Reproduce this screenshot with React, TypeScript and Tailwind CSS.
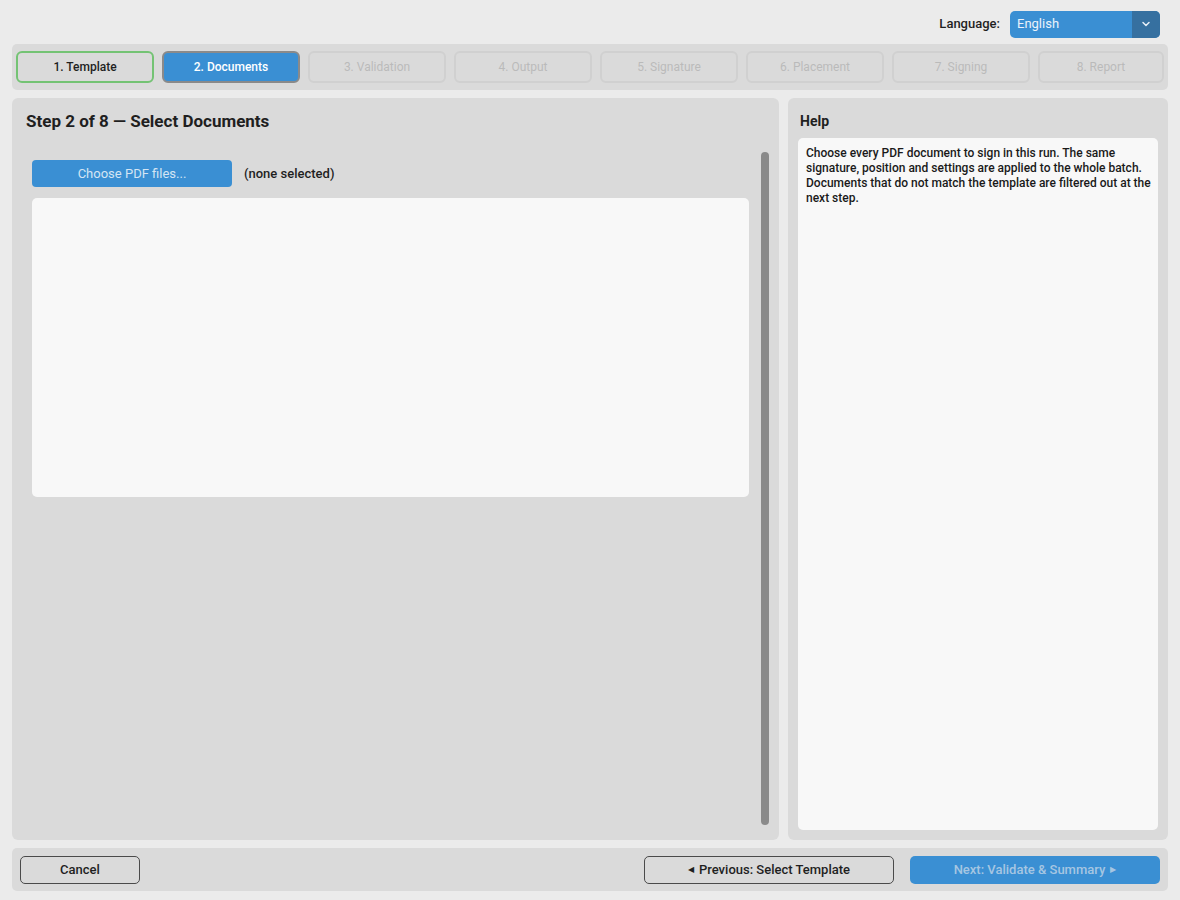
import { ChevronDown } from "lucide-react";

const steps = [
  "1. Template",
  "2. Documents",
  "3. Validation",
  "4. Output",
  "5. Signature",
  "6. Placement",
  "7. Signing",
  "8. Report",
];

const current = 1;

function StepButton({ label, index }: { label: string; index: number }) {
  const base = "h-[32px] rounded-[6px] border-2 text-[12px] flex items-center justify-center";
  const width = index === steps.length - 1 ? "flex-1 min-w-0" : "w-[138px] shrink-0";
  let look = "border-[#d0d0d0] text-[#bababa] bg-[#dadada]";
  if (index < current) look = "border-[#74c374] text-[#1f1f1f] bg-[#dadada] font-medium";
  if (index === current) look = "border-[#8a8a8a] text-white bg-[#3a8fd3] font-medium";
  return <div className={`${base} ${width} ${look}`}>{label}</div>;
}

export default function App() {
  return (
    <div
      className="w-[1180px] h-[900px] bg-[#ebebeb] flex flex-col text-[#1f1f1f]"
      style={{ fontFamily: "Roboto, 'Noto Sans', sans-serif" }}
    >
      {/* language picker */}
      <div className="h-[44px] flex items-center justify-end pr-[20px] pt-[4px] gap-[10px]">
        <span className="text-[13px] font-medium">Language:</span>
        <div className="w-[150px] h-[27px] rounded-[5px] bg-[#3a8fd3] flex overflow-hidden">
          <span className="flex-1 text-[13px] text-[#eaf3fb] pl-[7px] flex items-center">English</span>
          <span className="w-[28px] bg-[#3670a0] flex items-center justify-center text-[#e6eef6]">
            <ChevronDown size={12} strokeWidth={3} />
          </span>
        </div>
      </div>

      {/* wizard steps */}
      <div className="mx-[12px] h-[46px] rounded-[5px] bg-[#dadada] flex items-center gap-[8px] px-[4px]">
        {steps.map((s, i) => (
          <StepButton key={s} label={s} index={i} />
        ))}
      </div>

      <div className="mx-[12px] mt-[8px] h-[742px] flex gap-[9px]">
        {/* main step panel */}
        <div className="w-[767px] rounded-[6px] bg-[#dadada] flex flex-col">
          <h1 className="text-[17px] font-bold pl-[14px] pt-[13px] leading-[21px]">
            Step 2 of 8 — Select Documents
          </h1>
          <div className="flex flex-1 pt-[20px] pb-[15px]">
            <div className="flex-1 pl-[20px] pr-[12px] pt-[8px]">
              <div className="flex items-center gap-[12px]">
                <div className="w-[200px] h-[27px] rounded-[4px] bg-[#3a8fd3] text-[#d4e5f4] text-[13px] flex items-center justify-center">
                  Choose PDF files...
                </div>
                <span className="text-[13px] font-medium">(none selected)</span>
              </div>
              <div className="mt-[11px] h-[299px] rounded-[5px] bg-[#f8f8f8]"></div>
            </div>
            <div className="w-[8px] mr-[10px] rounded-full bg-[#8a8a8a]"></div>
          </div>
        </div>

        {/* help panel */}
        <div className="flex-1 rounded-[6px] bg-[#dadada] flex flex-col px-[10px] pb-[10px]">
          <h2 className="text-[14px] font-bold pl-[2px] pt-[14px] leading-[18px]">Help</h2>
          <div className="mt-[8px] flex-1 rounded-[5px] bg-[#f8f8f8] pl-[8px] pr-[3px] pt-[8px] text-[12px] leading-[15px] font-medium text-[#1a1a1a]">
            Choose every PDF document to sign in this run. The same signature, position and settings
            are applied to the whole batch. Documents that do not match the template are filtered
            out at the next step.
          </div>
        </div>
      </div>

      {/* navigation */}
      <div className="mx-[12px] mt-[8px] h-[43px] rounded-[5px] bg-[#dadada] flex items-center px-[8px]">
        <div className="w-[120px] h-[28px] rounded-[5px] border border-[#4a4a4a] text-[13px] font-medium flex items-center justify-center">
          Cancel
        </div>
        <div className="flex-1"></div>
        <div className="w-[250px] h-[28px] rounded-[5px] border border-[#4a4a4a] text-[13px] font-medium flex items-center justify-center gap-[5px]">
          <span className="text-[8px]">◀</span>
          Previous: Select Template
        </div>
        <div className="ml-[16px] w-[250px] h-[28px] rounded-[5px] bg-[#3a8fd3] text-[#a6c6e2] text-[13px] font-medium flex items-center justify-center gap-[5px]">
          Next: Validate &amp; Summary
          <span className="text-[8px]">▶</span>
        </div>
      </div>
    </div>
  );
}
